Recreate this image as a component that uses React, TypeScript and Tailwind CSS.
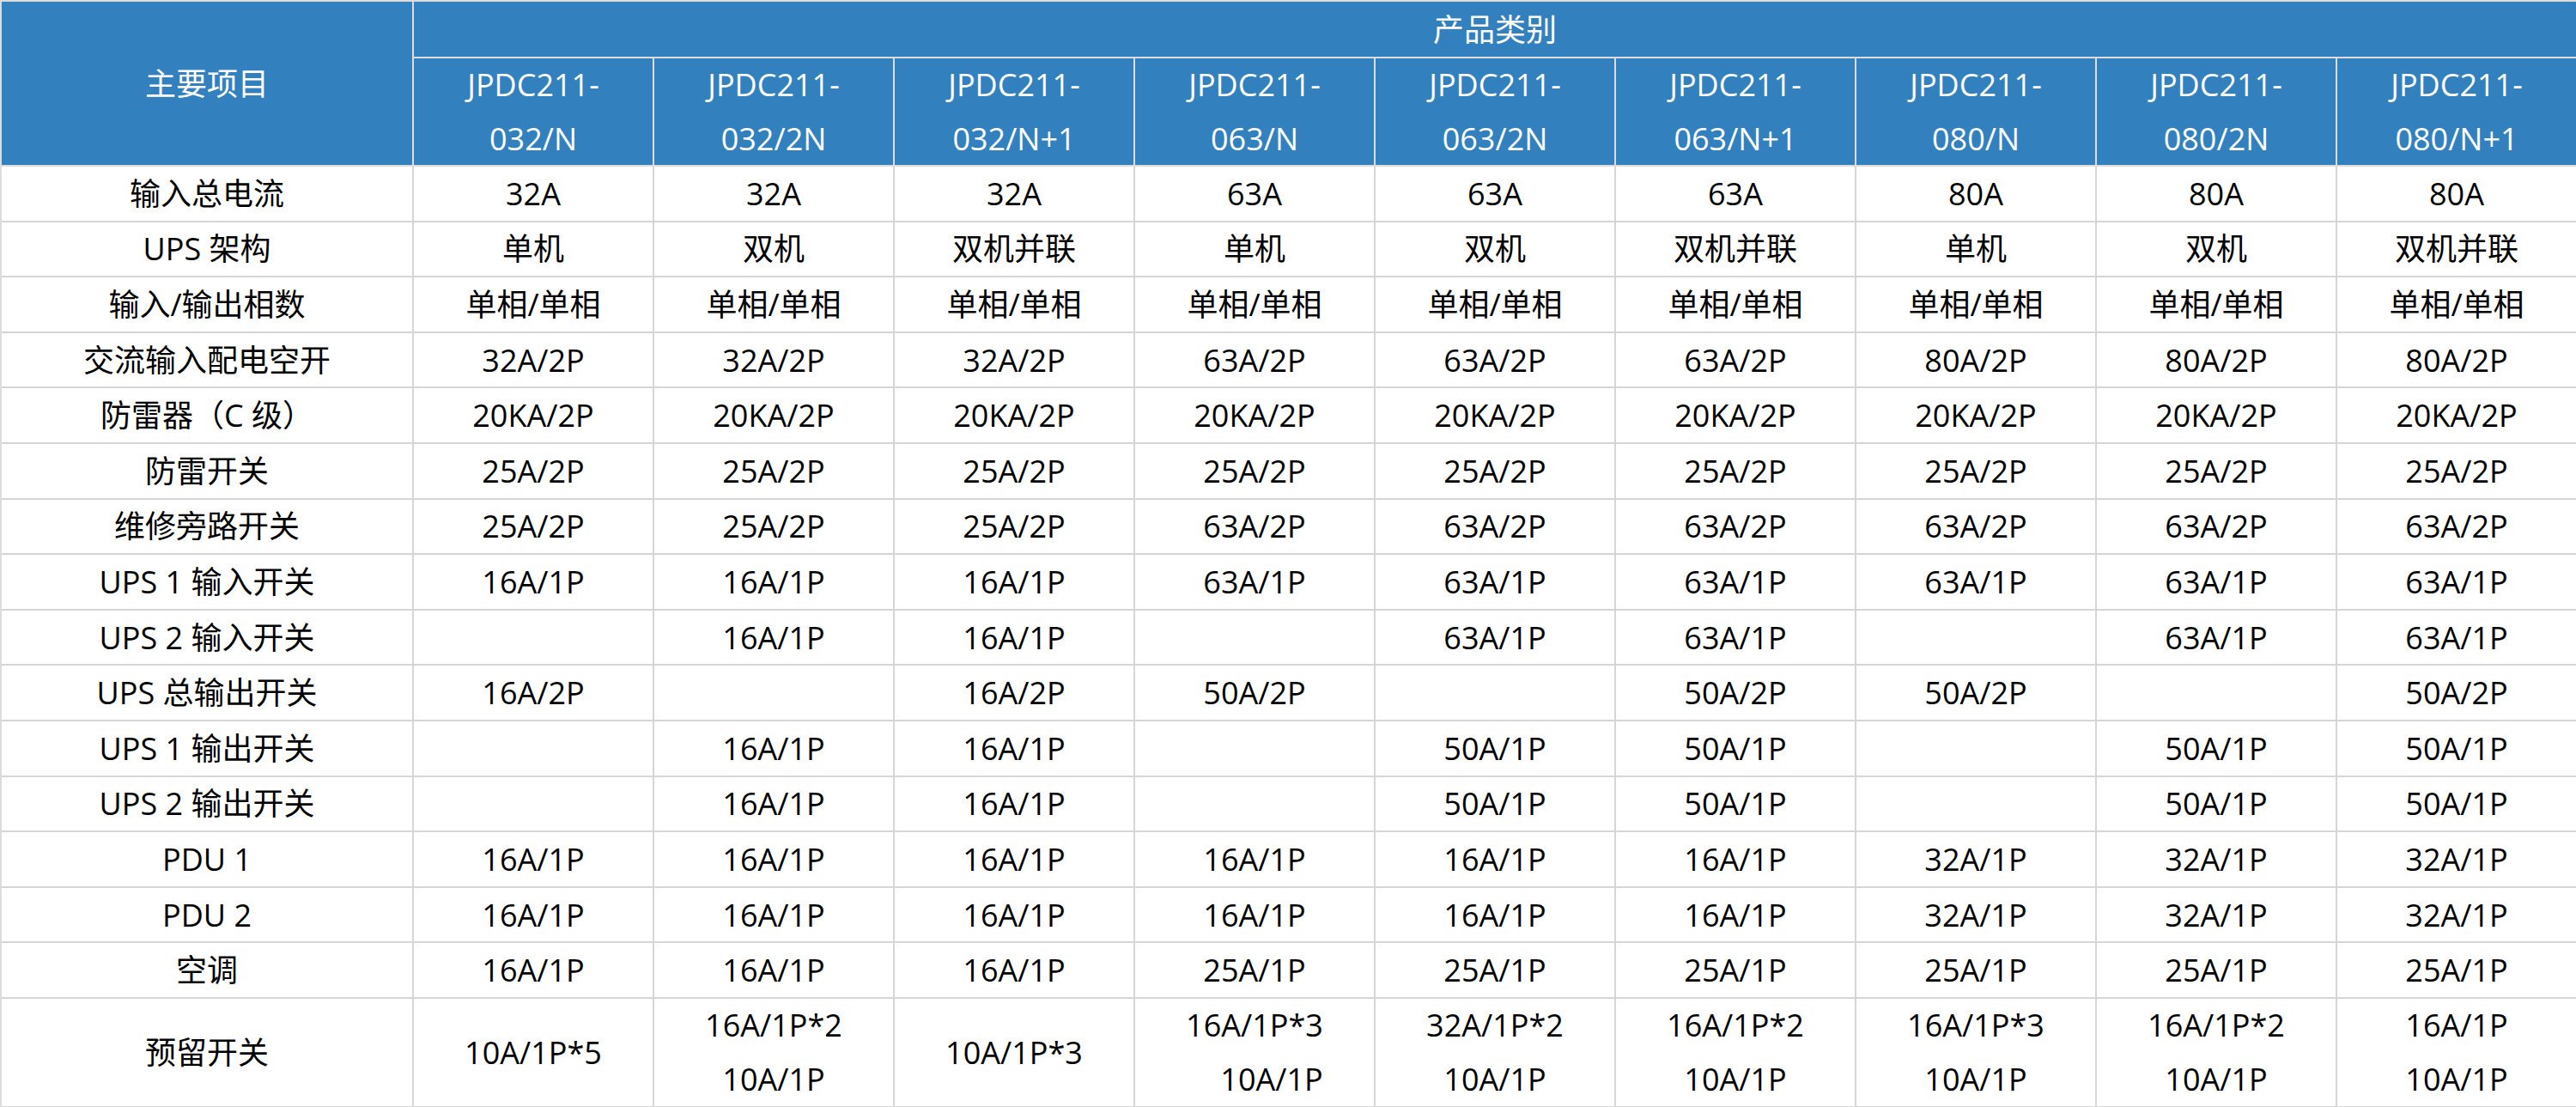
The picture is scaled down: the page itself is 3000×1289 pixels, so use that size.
import React from 'react';

const MODELS = [
  ['JPDC211-', '032/N'],
  ['JPDC211-', '032/2N'],
  ['JPDC211-', '032/N+1'],
  ['JPDC211-', '063/N'],
  ['JPDC211-', '063/2N'],
  ['JPDC211-', '063/N+1'],
  ['JPDC211-', '080/N'],
  ['JPDC211-', '080/2N'],
  ['JPDC211-', '080/N+1'],
];

const rep = (v: string, n: number) => Array(n).fill(v) as string[];

const ROWS: [string, string[]][] = [
  ['输入总电流', [...rep('32A', 3), ...rep('63A', 3), ...rep('80A', 3)]],
  ['UPS 架构', ['单机', '双机', '双机并联', '单机', '双机', '双机并联', '单机', '双机', '双机并联']],
  ['输入/输出相数', rep('单相/单相', 9)],
  ['交流输入配电空开', [...rep('32A/2P', 3), ...rep('63A/2P', 3), ...rep('80A/2P', 3)]],
  ['防雷器（C 级）', rep('20KA/2P', 9)],
  ['防雷开关', rep('25A/2P', 9)],
  ['维修旁路开关', [...rep('25A/2P', 3), ...rep('63A/2P', 6)]],
  ['UPS 1 输入开关', [...rep('16A/1P', 3), ...rep('63A/1P', 6)]],
  ['UPS 2 输入开关', ['', '16A/1P', '16A/1P', '', '63A/1P', '63A/1P', '', '63A/1P', '63A/1P']],
  ['UPS 总输出开关', ['16A/2P', '', '16A/2P', '50A/2P', '', '50A/2P', '50A/2P', '', '50A/2P']],
  ['UPS 1 输出开关', ['', '16A/1P', '16A/1P', '', '50A/1P', '50A/1P', '', '50A/1P', '50A/1P']],
  ['UPS 2 输出开关', ['', '16A/1P', '16A/1P', '', '50A/1P', '50A/1P', '', '50A/1P', '50A/1P']],
  ['PDU 1', [...rep('16A/1P', 6), ...rep('32A/1P', 3)]],
  ['PDU 2', [...rep('16A/1P', 6), ...rep('32A/1P', 3)]],
  ['空调', [...rep('16A/1P', 3), ...rep('25A/1P', 6)]],
];

// last row: first line, second line, shift second line
const RESERVED: [string, string, boolean][] = [
  ['10A/1P*5', '', false],
  ['16A/1P*2', '10A/1P', false],
  ['10A/1P*3', '', false],
  ['16A/1P*3', '10A/1P', true],
  ['32A/1P*2', '10A/1P', false],
  ['16A/1P*2', '10A/1P', false],
  ['16A/1P*3', '10A/1P', false],
  ['16A/1P*2', '10A/1P', false],
  ['16A/1P', '10A/1P', false],
];

const cell = 'flex items-center justify-center text-center border-r-2 border-b-2 border-[#d6d6d6]';
const head = cell + ' bg-[#3281be] text-white border-[#dcdcdc]';

export default function App() {
  return (
    <div className="w-[3000px] h-[1289px] bg-white overflow-hidden font-['Open_Sans','Noto_Sans_CJK_SC',sans-serif] text-[36px] leading-[63px] text-black">
      <div className="grid grid-cols-[480px_repeat(9,280px)] grid-rows-[66px_126px_repeat(15,64.6px)_127px] border-l-2 border-t-2 border-[#dcdcdc] box-border">
        <div className={head + ' row-span-2'}>主要项目</div>
        <div className={head + ' col-span-9'}>产品类别</div>
        {MODELS.map(([a, b], i) => (
          <div key={i} className={head + ' flex-col'}>
            <span>{a}</span>
            <span>{b}</span>
          </div>
        ))}

        {ROWS.map(([label, vals]) => (
          <React.Fragment key={label}>
            <div className={cell}>{label}</div>
            {vals.map((v, i) => (
              <div key={i} className={cell}>{v}</div>
            ))}
          </React.Fragment>
        ))}

        <div className={cell}>预留开关</div>
        {RESERVED.map(([a, b, shift], i) => (
          <div key={i} className={cell + ' flex-col'}>
            <span>{a}</span>
            {b && <span className={shift ? 'pl-[40px]' : ''}>{b}</span>}
          </div>
        ))}
      </div>
    </div>
  );
}
